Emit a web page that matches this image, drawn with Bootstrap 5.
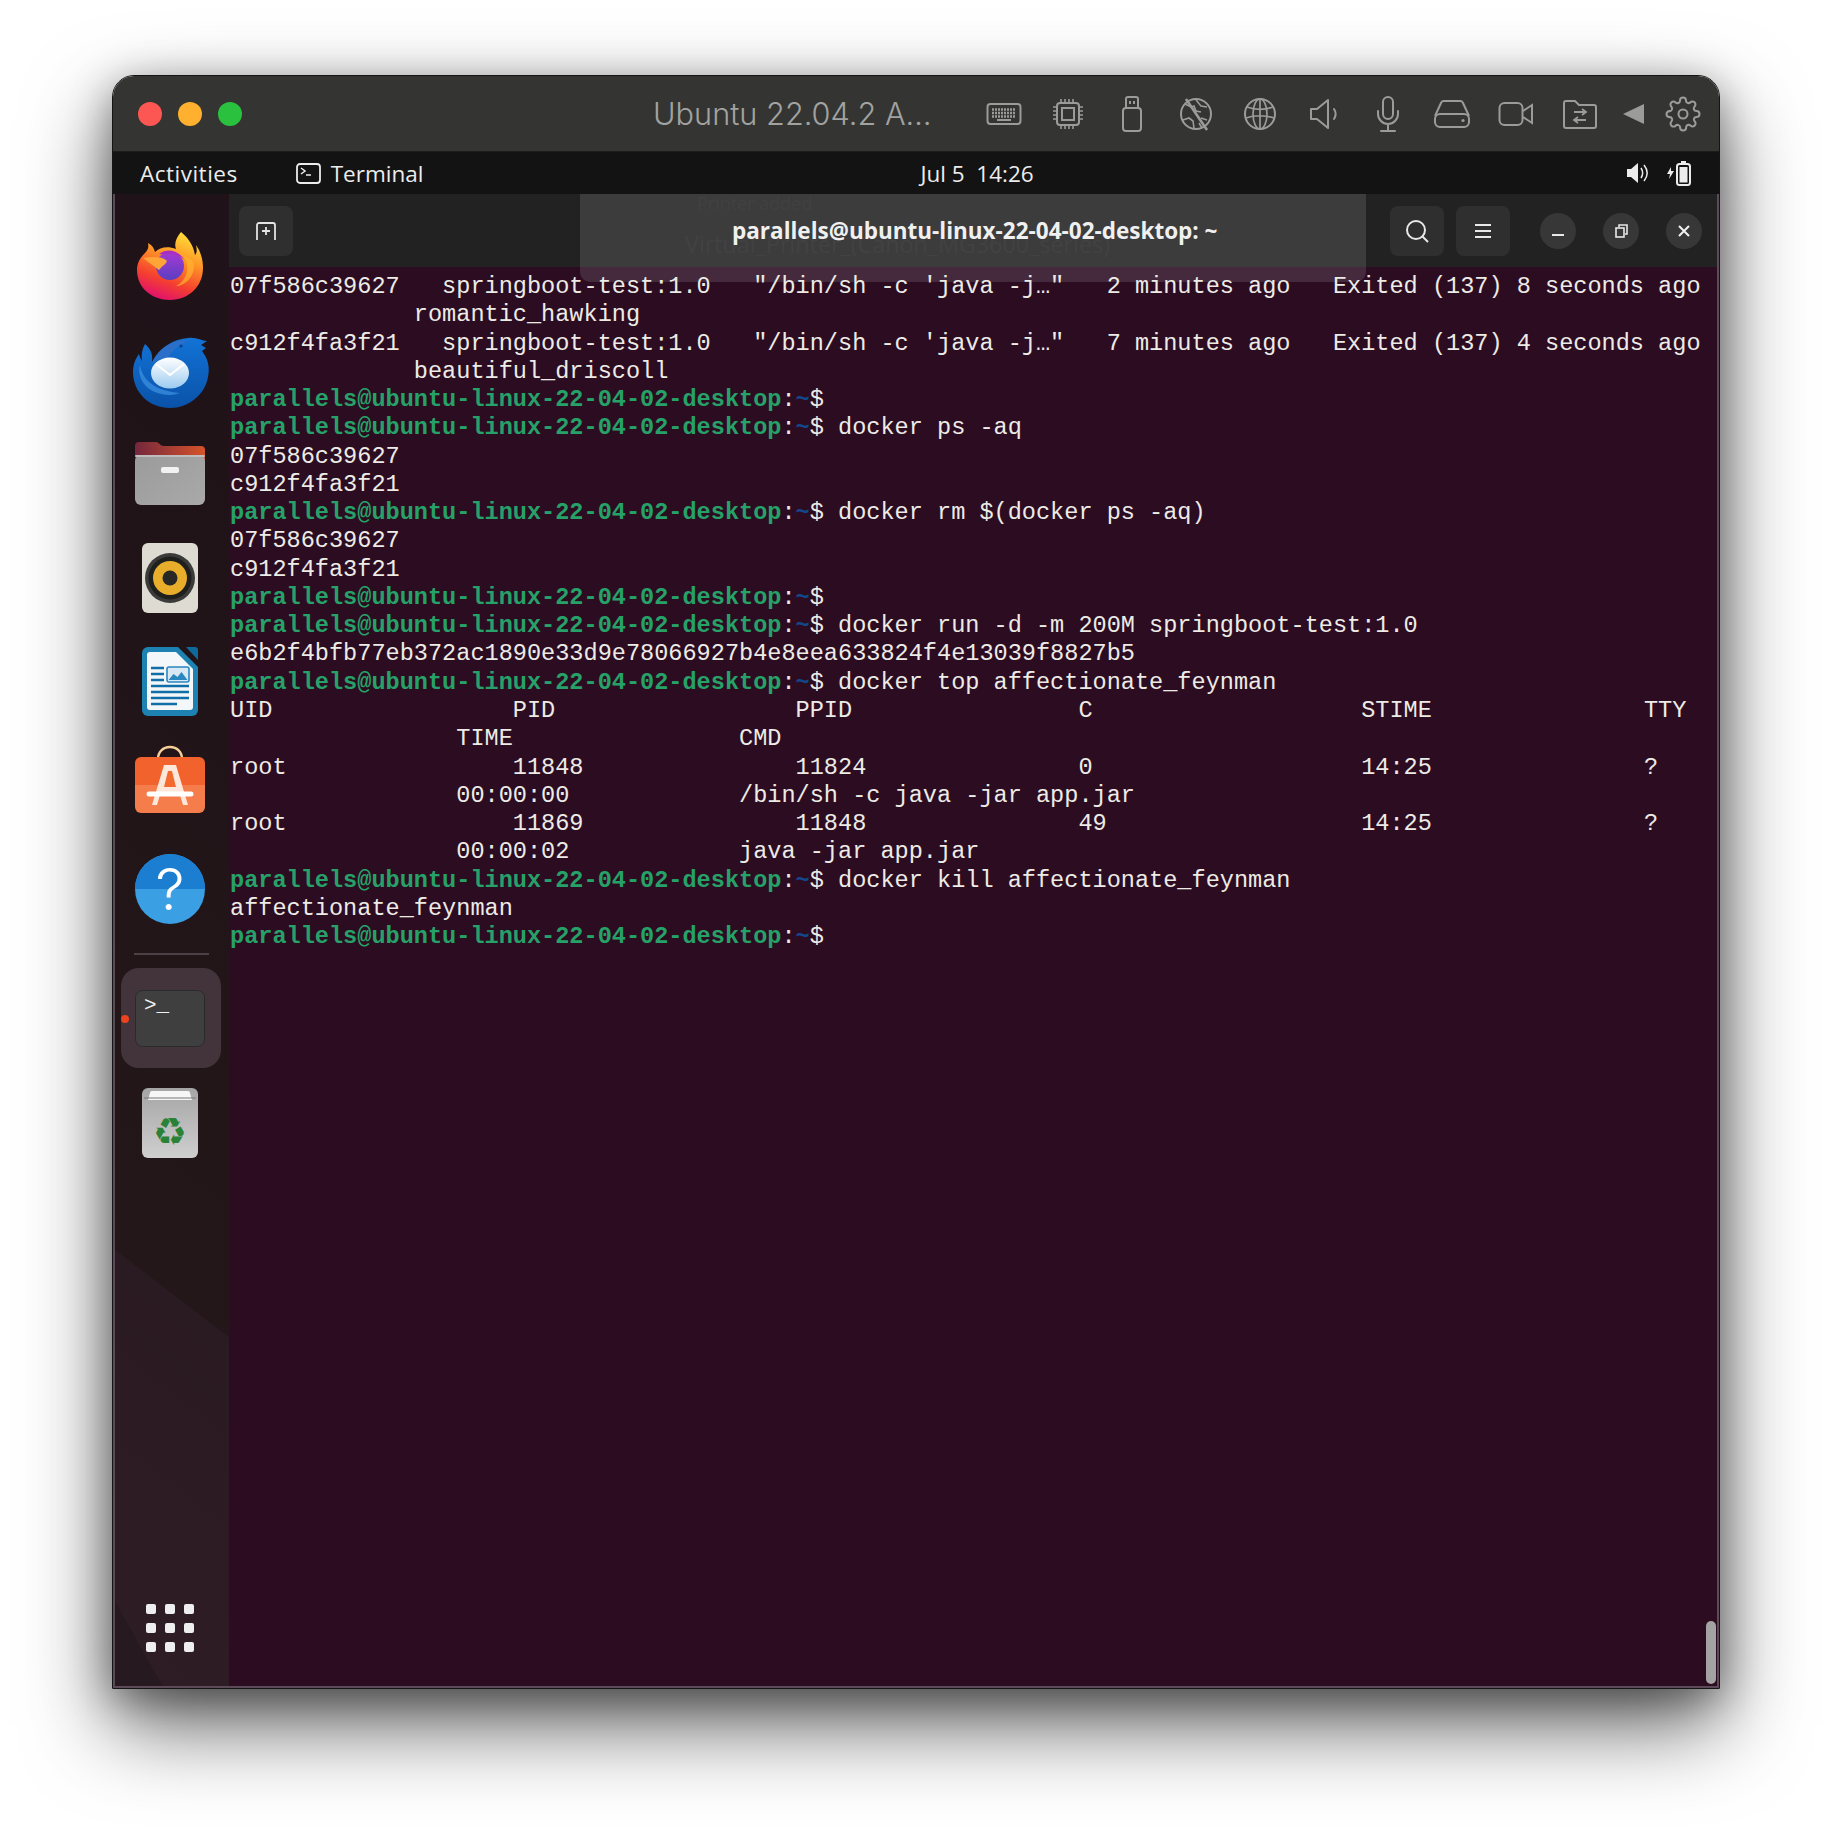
<!DOCTYPE html>
<html lang="en">
<head>
    <meta charset="UTF-8">
    <title>Ubuntu 22.04.2 - Terminal</title>
    <link href="https://cdn.jsdelivr.net/npm/bootstrap@5.3.0/dist/css/bootstrap.min.css" rel="stylesheet">
    <style>
        html, body { background: #fff; }
        .stage { padding: 75px 112px 147px; }
        .vm-window {
            height: 1614px;
            border: 1px solid #151515;
            border-radius: 22px 22px 0 0;
            overflow: hidden;
            box-shadow: 0 36px 85px rgba(0,0,0,.62), 0 10px 40px rgba(0,0,0,.35);
        }
        .vm-title { height: 76px; background: #343533; padding-left: 25px; border-bottom: 1px solid #1c1c1c; flex: none; }
        .light { width: 24px; height: 24px; border-radius: 50%; }
        .vm-name { margin-left: 411px; font: 300 30.7px Inter, "Liberation Sans", sans-serif; color: #a2a3a0; white-space: nowrap; }
        .tool-strip { padding-right: 9px; }
        .tool-slot { width: 64px; height: 40px; }
        .tool-tri { width: 44px; }
        .tool-gear { width: 54px; }
        .gnome-bar { height: 42px; background: #131313; color: #ececec; padding-left: 27px; flex: none; font: 400 22.5px "Open Sans", sans-serif; }
        .gnome-act { letter-spacing: .5px; }
        .gnome-app { margin-left: 58px; }
        .gnome-app svg { margin-right: 10px; }
        .gnome-clock { margin-left: 497px; font-size: 22.5px; white-space: pre; }
        .gnome-status { padding-right: 27px; }
        .vm-body { min-height: 0; border: solid #5d4a58; border-width: 0 2px 2px; }
        .dock {
            width: 114px;
            flex: none;
            padding-top: 20px;
            background:
                linear-gradient(240.6deg, transparent 790px, #271920 790px),
                linear-gradient(217.6deg, #1f1218 0, #231719 906px, #2a1a21 906px, #2f1d26 100%);
        }
        .dock-slot { height: 103px; margin-left: 15px; width: 80px; }
        .dock-slot svg { display: block; }
        .dock-sep { height: 2px; margin: 18px 0 0 19px; width: 75px; background: #4c3f46; }
        .dock-active { position: relative; width: 100px; height: 100px; margin: 13px 0 0 6px; border-radius: 18px; background: #43343c; }
        .dock-active svg { display: block; margin-left: 9px; padding-top: 0; }
        .dock-dot { position: absolute; left: 0; top: 47px; width: 8px; height: 8px; border-radius: 50%; background: #e9441f; }
        .apps-grid { margin: auto 0 34px 31px; display: grid; grid-template-columns: repeat(3, 10px); gap: 9px; }
        .apps-grid i { display: block; width: 10px; height: 10px; border-radius: 2px; background: #eeeeee; }
        .term-col { min-width: 0; position: relative; background: #2c0c21; }
        .head-bar { height: 73px; background: #222222; flex: none; }
        .head-btn { width: 54px; height: 50px; border-radius: 8px; background: #2f2f2f; flex: none; }
        .head-new { margin-left: 10px; }
        .head-name { margin-left: 439px; position: relative; z-index: 3; font: 700 22.5px "Open Sans", sans-serif; color: #f0f0f0; white-space: nowrap; }
        .head-right { padding-right: 15px; }
        .head-round { width: 36px; height: 36px; border-radius: 50%; background: #373737; }
        .gap-menu { margin-left: 12px; margin-right: 30px; }
        .gap-max { margin: 0 27px; }
        .notice {
            position: absolute; left: 351px; top: 0; width: 786px; height: 88px;
            background: rgba(255,255,255,.12);
            border-radius: 0 0 10px 10px;
            font: 400 23.3px/38px "Open Sans", sans-serif; color: #424242;
            z-index: 2; padding-left: 105px; margin: 0;
            white-space: nowrap;
        }
        .notice-head { margin: -10px 0 3px; padding-left: 12px; font-size: 18px; color: #414141; }
        .term-out {
            position: relative; z-index: 3;
            margin: 0; padding: 6px 0 0 1px; overflow: hidden;
            font: 400 23.57px/28.27px "Liberation Mono", monospace;
            color: #ecebe6; white-space: pre;
        }
        .pr { color: #26a269; font-weight: 700; }
        .pa { color: #12488b; font-weight: 700; }
        .scroll-thumb { position: absolute; right: 1px; bottom: 2px; width: 10px; height: 63px; border-radius: 5px; background: #a3a3a3; }
    </style>
</head>
<body>
<div class="stage">
<div class="vm-window d-flex flex-column">

    <div class="vm-title d-flex align-items-center">
        <div class="d-flex gap-3">
            <div class="light" style="background:#fd5754"></div>
            <div class="light" style="background:#feb02e"></div>
            <div class="light" style="background:#2ac13f"></div>
        </div>
        <div class="vm-name">Ubuntu 22.04.2 A…</div>
        <div class="tool-strip d-flex align-items-center ms-auto">
            <!-- keyboard -->
            <div class="tool-slot d-flex align-items-center justify-content-center">
                <svg width="36" height="24" viewBox="0 0 36 24" fill="none" stroke="#9b9c99" stroke-width="2"><rect x="1.5" y="2" width="33" height="20" rx="3"/><path d="M6 7.5h24M6 11h24M6 14.5h24" stroke-width="2.4" stroke-dasharray="2 1"/><path d="M11 18h14"/></svg>
            </div>
            <!-- cpu -->
            <div class="tool-slot d-flex align-items-center justify-content-center">
                <svg width="32" height="32" viewBox="0 0 32 32" fill="none" stroke="#9b9c99" stroke-width="2"><rect x="5" y="5" width="22" height="22" rx="3"/><rect x="10" y="10" width="12" height="12"/><path d="M9 1v4M13 1v4M17 1v4M21 1v4M9 27v4M13 27v4M17 27v4M21 27v4M1 9h4M1 13h4M1 17h4M1 21h4M27 9h4M27 13h4M27 17h4M27 21h4" stroke-width="1.6"/></svg>
            </div>
            <!-- usb -->
            <div class="tool-slot d-flex align-items-center justify-content-center">
                <svg width="22" height="36" viewBox="0 0 22 36" fill="none" stroke="#9b9c99" stroke-width="2"><rect x="2" y="12" width="18" height="23" rx="3"/><path d="M5 12V3a2 2 0 0 1 2-2h8a2 2 0 0 1 2 2v9"/><path d="M9 5v3M13 5v3"/></svg>
            </div>
            <!-- network off -->
            <div class="tool-slot d-flex align-items-center justify-content-center">
                <svg width="34" height="34" viewBox="0 0 34 34" fill="none" stroke="#9b9c99" stroke-width="2"><circle cx="17" cy="17" r="15"/><path d="M6 7l6 3 3-1 2 5 5 1M17 3l5 6 6 1M4 23l6-2 4 3 1 7M22 21l6 2M20 26l3 5" stroke-width="1.6"/><path d="M7 2l21 31" stroke-width="2.6"/></svg>
            </div>
            <!-- globe -->
            <div class="tool-slot d-flex align-items-center justify-content-center">
                <svg width="34" height="34" viewBox="0 0 34 34" fill="none" stroke="#9b9c99" stroke-width="2"><circle cx="17" cy="17" r="15"/><ellipse cx="17" cy="17" rx="7" ry="15" stroke-width="1.7"/><path d="M4 10c8 3 18 3 26 0M3 21c8-3 20-3 28 0M17 2v30" stroke-width="1.7"/></svg>
            </div>
            <!-- speaker -->
            <div class="tool-slot d-flex align-items-center justify-content-center">
                <svg width="30" height="32" viewBox="0 0 30 32" fill="none" stroke="#9b9c99" stroke-width="2" stroke-linejoin="round"><path d="M2 11v10h6l11 9V2L8 11z"/><path d="M25 11c2 3 2 7 0 10" stroke-linecap="round"/></svg>
            </div>
            <!-- mic -->
            <div class="tool-slot d-flex align-items-center justify-content-center">
                <svg width="26" height="36" viewBox="0 0 26 36" fill="none" stroke="#9b9c99" stroke-width="2" stroke-linecap="round"><rect x="8" y="1" width="10" height="22" rx="5"/><path d="M3 15v3a10 10 0 0 0 20 0v-3M13 28v6M6 35h14"/></svg>
            </div>
            <!-- disk -->
            <div class="tool-slot d-flex align-items-center justify-content-center">
                <svg width="38" height="28" viewBox="0 0 38 28" fill="none" stroke="#9b9c99" stroke-width="2"><path d="M2 16L8 3a3 3 0 0 1 3-2h16a3 3 0 0 1 3 2l6 13"/><rect x="2" y="14" width="34" height="13" rx="5"/><circle cx="30" cy="20.5" r="1.6" fill="#9b9c99" stroke="none"/></svg>
            </div>
            <!-- camera -->
            <div class="tool-slot d-flex align-items-center justify-content-center">
                <svg width="36" height="26" viewBox="0 0 36 26" fill="none" stroke="#9b9c99" stroke-width="2"><rect x="1.5" y="2" width="23" height="22" rx="5"/><path d="M25 10l9-6v18l-9-6"/></svg>
            </div>
            <!-- shared folder -->
            <div class="tool-slot d-flex align-items-center justify-content-center">
                <svg width="36" height="30" viewBox="0 0 36 30" fill="none" stroke="#9b9c99" stroke-width="2"><path d="M2 4a2 2 0 0 1 2-2h9l4 4h15a2 2 0 0 1 2 2v19a2 2 0 0 1-2 2H4a2 2 0 0 1-2-2z"/><path d="M12 13h11M20 10l4 3-4 3M24 21H13M16 18l-4 3 4 3" stroke-width="1.8"/></svg>
            </div>
            <div class="tool-slot tool-tri d-flex align-items-center justify-content-center">
                <svg width="22" height="20" viewBox="0 0 22 20"><path d="M0 10L21 0v20z" fill="#9b9c99"/></svg>
            </div>
            <div class="tool-slot tool-gear d-flex align-items-center justify-content-center">
                <svg width="36" height="36" viewBox="0 0 24 24" fill="none" stroke="#9b9c99" stroke-width="1.35"><circle cx="12" cy="12" r="3"/><path d="M19.4 15a1.65 1.65 0 0 0 .33 1.82l.06.06a2 2 0 0 1 0 2.83 2 2 0 0 1-2.83 0l-.06-.06a1.65 1.65 0 0 0-1.82-.33 1.65 1.65 0 0 0-1 1.51V21a2 2 0 0 1-2 2 2 2 0 0 1-2-2v-.09A1.65 1.65 0 0 0 9 19.4a1.65 1.65 0 0 0-1.82.33l-.06.06a2 2 0 0 1-2.83 0 2 2 0 0 1 0-2.83l.06-.06a1.65 1.65 0 0 0 .33-1.82 1.65 1.65 0 0 0-1.51-1H3a2 2 0 0 1-2-2 2 2 0 0 1 2-2h.09A1.65 1.65 0 0 0 4.6 9a1.65 1.65 0 0 0-.33-1.82l-.06-.06a2 2 0 0 1 0-2.83 2 2 0 0 1 2.83 0l.06.06a1.65 1.65 0 0 0 1.82.33H9a1.65 1.65 0 0 0 1-1.51V3a2 2 0 0 1 2-2 2 2 0 0 1 2 2v.09a1.65 1.65 0 0 0 1 1.51 1.65 1.65 0 0 0 1.82-.33l.06-.06a2 2 0 0 1 2.83 0 2 2 0 0 1 0 2.83l-.06.06a1.65 1.65 0 0 0-.33 1.82V9a1.65 1.65 0 0 0 1.51 1H21a2 2 0 0 1 2 2 2 2 0 0 1-2 2h-.09a1.65 1.65 0 0 0-1.51 1z"/></svg>
            </div>
        </div>
    </div>

    <div class="gnome-bar d-flex align-items-center">
        <span class="gnome-act">Activities</span>
        <span class="gnome-app d-flex align-items-center">
            <svg width="25" height="21" viewBox="0 0 25 21" fill="none" stroke="#ececec" stroke-width="1.8"><rect x="1" y="1" width="23" height="19" rx="3"/><path d="M5 5l4 3-4 3M10 12h5" stroke-width="1.5"/></svg>Terminal
        </span>
        <span class="gnome-clock">Jul 5  14:26</span>
        <span class="gnome-status d-flex align-items-center gap-3 ms-auto">
            <svg width="24" height="22" viewBox="0 0 24 22" fill="#ececec"><path d="M1 7v8h4l7 6V1L5 7z"/><path d="M15 6c2 3 2 7 0 10M18 3c4 5 4 11 0 16" fill="none" stroke="#ececec" stroke-width="1.5"/></svg>
            <svg width="26" height="26" viewBox="0 0 26 26" fill="none"><path d="M5 7L1 14h3l-1 5 5-8H5z" fill="#ececec"/><rect x="11" y="4" width="13" height="21" rx="2.5" stroke="#ececec" stroke-width="2"/><rect x="15" y="1" width="5" height="3" fill="#ececec"/><rect x="13.5" y="7" width="8" height="15.5" fill="#ececec"/></svg>
        </span>
    </div>

    <div class="vm-body d-flex flex-grow-1">
        <div class="dock d-flex flex-column">
            <!-- firefox -->
            <div class="dock-slot">
                <svg width="80" height="103" viewBox="0 0 80 103">
                    <defs>
                        <linearGradient id="ffBody" x1=".72" y1="0" x2=".35" y2="1"><stop offset="0" stop-color="#ffe03b"/><stop offset=".35" stop-color="#ff9a26"/><stop offset=".72" stop-color="#f5402f"/><stop offset="1" stop-color="#e0106e"/></linearGradient>
                        <linearGradient id="ffEye" x1="0" y1="0" x2="0" y2="1"><stop offset="0" stop-color="#a639d2"/><stop offset="1" stop-color="#5a3fc2"/></linearGradient>
                    </defs>
                    <path d="M51 18C46 24 44 30 46 35C38 32 30 33 25 38C24 34 22 31 18 29C19 33 18 36 15 39C9 45 7 50 7 56C7 74 22 86 40 86C59 86 73 72 73 54C73 46 71 38 66 31C67 36 67 39 65 41C63 30 58 24 51 18Z" fill="url(#ffBody)"/>
                    <circle cx="40" cy="52" r="14" fill="url(#ffEye)"/>
                    <path d="M29 40C38 33 50 37 55 47C53 43 46 40 40 40C36 40 32 41 29 40Z" fill="#a92fc4"/>
                    <path d="M13 44C21 43 30 42 36 46C39 48 33 51 29 56C24 52 18 48 13 44Z" fill="#ffa538"/>
                    <path d="M54 42C60 52 58 66 46 72C54 72 64 64 64 52C64 47 60 44 54 42Z" fill="#ffb52e" opacity=".7"/>
                </svg>
            </div>
            <!-- thunderbird -->
            <div class="dock-slot">
                <svg width="80" height="103" viewBox="0 0 80 103">
                    <defs>
                        <linearGradient id="tbBody" x1="0" y1="0" x2="0" y2="1"><stop offset="0" stop-color="#1273d6"/><stop offset="1" stop-color="#0a52a8"/></linearGradient>
                        <linearGradient id="tbEnv" x1="0" y1="0" x2="0" y2="1"><stop offset="0" stop-color="#ffffff"/><stop offset="1" stop-color="#9ccbf0"/></linearGradient>
                    </defs>
                    <path d="M15 27C21 32 23 38 22 45C30 30 44 22 58 21C66 20 72 24 77 24L71 28L76 31L72 34C78 42 80 50 78 60C75 78 58 91 40 91C20 91 3 76 3 55C3 47 6 41 9 37C10 41 11 42 12 44C11 38 12 32 15 27Z" fill="url(#tbBody)"/>
                    <path d="M22 47C27 31 44 22 60 23C50 27 42 33 38 41C32 41 26 43 22 47Z" fill="#2b6fc9"/>
                    <circle cx="51" cy="29" r="1.6" fill="#0a3f86"/>
                    <path d="M10 48C12 62 24 74 50 76C40 80 24 78 15 68C10 62 8 54 10 48Z" fill="#3b8fe0" opacity=".75"/>
                    <ellipse cx="40" cy="56" rx="19" ry="15.5" fill="url(#tbEnv)"/>
                    <path d="M26 47l14 11 14-11" fill="none" stroke="#ffffff" stroke-width="2"/>
                </svg>
            </div>
            <!-- files -->
            <div class="dock-slot">
                <svg width="80" height="103" viewBox="0 0 80 103">
                    <defs>
                        <linearGradient id="fiTab" x1="0" y1="0" x2="1" y2="0"><stop offset="0" stop-color="#74273d"/><stop offset="1" stop-color="#d6532a"/></linearGradient>
                        <linearGradient id="fiBox" x1="0" y1="0" x2="1" y2="1"><stop offset="0" stop-color="#9b9b9b"/><stop offset="1" stop-color="#a9a9a9"/></linearGradient>
                    </defs>
                    <path d="M5 40V26a4 4 0 0 1 4-4H26c3 0 4 4 8 4H71a4 4 0 0 1 4 4V40z" fill="url(#fiTab)"/>
                    <rect x="5" y="35" width="70" height="50" rx="6" fill="url(#fiBox)"/>
                    <rect x="5" y="35" width="70" height="2" rx="1" fill="#bdbdbd"/>
                    <rect x="31" y="47" width="18" height="6" rx="2" fill="#f2f2f2"/>
                </svg>
            </div>
            <!-- rhythmbox -->
            <div class="dock-slot">
                <svg width="80" height="103" viewBox="0 0 80 103">
                    <rect x="12" y="20" width="56" height="70" rx="6" fill="#dedbd2"/>
                    <circle cx="40" cy="55" r="25" fill="#3b3b39"/>
                    <circle cx="40" cy="55" r="21.5" fill="#1f1f1e"/>
                    <circle cx="40" cy="55" r="17" fill="#e8ae2b"/>
                    <circle cx="40" cy="55" r="7.5" fill="#272725"/>
                </svg>
            </div>
            <!-- writer -->
            <div class="dock-slot">
                <svg width="80" height="103" viewBox="0 0 80 103">
                    <path d="M56 21h9a3 3 0 0 1 3 3v10z" fill="#0f6a9c"/>
                    <path d="M18 21H48L68 41V84a6 6 0 0 1-6 6H18a6 6 0 0 1-6-6V27a6 6 0 0 1 6-6z" fill="#1d82b2"/>
                    <path d="M20 26H46L63 43V81a3 3 0 0 1-3 3H20a3 3 0 0 1-3-3V29a3 3 0 0 1 3-3z" fill="#f4f7f9"/>
                    <path d="M21 42h13M21 48h13M21 54h13M21 60h38M21 66h38M21 72h38M21 78h26" stroke="#0f6ea8" stroke-width="2.6"/>
                    <rect x="37" y="41" width="22" height="15" rx="2" fill="#d8e9f5" stroke="#2a87c0" stroke-width="1.6"/>
                    <path d="M38.5 54l5-6 4 3 4-5 6 8z" fill="#2a87c0"/>
                </svg>
            </div>
            <!-- software -->
            <div class="dock-slot">
                <svg width="80" height="103" viewBox="0 0 80 103">
                    <path d="M28 30c0-7 5-12 12-12s12 5 12 12" fill="none" stroke="#f4cf9a" stroke-width="2.4"/>
                    <path d="M11 28H69a6 6 0 0 1 6 6V56H5V34a6 6 0 0 1 6-6z" fill="#f2622c"/>
                    <path d="M5 56H75V78a6 6 0 0 1-6 6H11a6 6 0 0 1-6-6z" fill="#f57d4b"/>
                    <path d="M34 36h12l12 40h-5l-3-10H30l-3 10h-5z" fill="#fde7da"/>
                    <path d="M38 42h4l4 16H34z" fill="#f3692f"/>
                    <path d="M19 65H61" stroke="#ffffff" stroke-width="5" stroke-linecap="round"/>
                </svg>
            </div>
            <!-- help -->
            <div class="dock-slot">
                <svg width="80" height="103" viewBox="0 0 80 103">
                    <circle cx="40" cy="57" r="35" fill="#3a9fe3"/>
                    <path d="M5 57a35 35 0 0 1 70 0z" fill="#1b7ed1"/>
                    <text x="40" y="78" text-anchor="middle" font-family="Inter, sans-serif" font-weight="300" font-size="58" fill="#ffffff">?</text>
                </svg>
            </div>
            <div class="dock-sep"></div>
            <div class="dock-active">
                <span class="dock-dot"></span>
                <svg width="80" height="100" viewBox="0 0 80 100">
                    <rect x="5.5" y="22.5" width="69" height="56" rx="7" fill="#403f3f" stroke="#2b2a2a"/>
                    <text x="14" y="43" font-family="Liberation Mono, monospace" font-size="21" fill="#f2f2f2">&gt;_</text>
                </svg>
            </div>
            <!-- trash -->
            <div class="dock-slot">
                <svg width="80" height="103" viewBox="0 0 80 103">
                    <defs><linearGradient id="trBody" x1="0" y1="0" x2="0" y2="1"><stop offset="0" stop-color="#a5a5a5"/><stop offset="1" stop-color="#cfcfcf"/></linearGradient></defs>
                    <rect x="12" y="20" width="56" height="70" rx="6" fill="url(#trBody)"/>
                    <path d="M18 32l2-7a2 2 0 0 1 2-2H58a2 2 0 0 1 2 2l2 7z" fill="#f6f6f6"/>
                    <path d="M14 30h52" stroke="#777" stroke-width="1"/>
                    <text x="40" y="77" text-anchor="middle" font-family="DejaVu Sans, sans-serif" font-size="38" fill="#2a8236">♻</text>
                </svg>
            </div>
            <div class="apps-grid">
                <i></i><i></i><i></i><i></i><i></i><i></i><i></i><i></i><i></i>
            </div>
        </div>

        <div class="term-col flex-grow-1">
            <div class="notice"><div class="notice-head">Printer added</div>Virtual_Printer_(Canon_MG3600_series)</div>
            <div class="head-bar d-flex align-items-center">
                <div class="head-btn head-new d-flex align-items-center justify-content-center">
                    <svg width="24" height="24" viewBox="0 0 24 24" fill="none" stroke="#e4e4e4" stroke-width="1.8"><path d="M3 21V6a2 2 0 0 1 2-2h14a2 2 0 0 1 2 2v15"/><path d="M12 8v8M8 12h8"/></svg>
                </div>
                <div class="head-name">parallels@ubuntu-linux-22-04-02-desktop: ~</div>
                <div class="head-right d-flex align-items-center ms-auto">
                    <div class="head-btn d-flex align-items-center justify-content-center">
                        <svg width="26" height="26" viewBox="0 0 26 26" fill="none" stroke="#e8e8e8" stroke-width="2"><circle cx="12" cy="12" r="9"/><path d="M18.5 18.5L24 24"/></svg>
                    </div>
                    <div class="head-btn gap-menu d-flex align-items-center justify-content-center">
                        <svg width="18" height="18" viewBox="0 0 18 18" stroke="#e8e8e8" stroke-width="2"><path d="M1 3h16M1 9h16M1 15h16"/></svg>
                    </div>
                    <div class="head-round d-flex align-items-center justify-content-center">
                        <svg width="14" height="14" viewBox="0 0 14 14" stroke="#e8e8e8" stroke-width="2"><path d="M1 11h12"/></svg>
                    </div>
                    <div class="head-round gap-max d-flex align-items-center justify-content-center">
                        <svg width="14" height="14" viewBox="0 0 14 14" fill="none" stroke="#e8e8e8" stroke-width="1.6"><rect x="2" y="4" width="8" height="9"/><path d="M5 3V1h8v9h-2"/></svg>
                    </div>
                    <div class="head-round d-flex align-items-center justify-content-center">
                        <svg width="14" height="14" viewBox="0 0 14 14" stroke="#f0f0f0" stroke-width="2"><path d="M2 2l10 10M12 2L2 12"/></svg>
                    </div>
                </div>
            </div>
<pre class="term-out">07f586c39627   springboot-test:1.0   "/bin/sh -c 'java -j…"   2 minutes ago   Exited (137) 8 seconds ago
             romantic_hawking
c912f4fa3f21   springboot-test:1.0   "/bin/sh -c 'java -j…"   7 minutes ago   Exited (137) 4 seconds ago
             beautiful_driscoll
<span class="pr">parallels@ubuntu-linux-22-04-02-desktop</span>:<span class="pa">~</span>$
<span class="pr">parallels@ubuntu-linux-22-04-02-desktop</span>:<span class="pa">~</span>$ docker ps -aq
07f586c39627
c912f4fa3f21
<span class="pr">parallels@ubuntu-linux-22-04-02-desktop</span>:<span class="pa">~</span>$ docker rm $(docker ps -aq)
07f586c39627
c912f4fa3f21
<span class="pr">parallels@ubuntu-linux-22-04-02-desktop</span>:<span class="pa">~</span>$
<span class="pr">parallels@ubuntu-linux-22-04-02-desktop</span>:<span class="pa">~</span>$ docker run -d -m 200M springboot-test:1.0
e6b2f4bfb77eb372ac1890e33d9e78066927b4e8eea633824f4e13039f8827b5
<span class="pr">parallels@ubuntu-linux-22-04-02-desktop</span>:<span class="pa">~</span>$ docker top affectionate_feynman
UID                 PID                 PPID                C                   STIME               TTY
                TIME                CMD
root                11848               11824               0                   14:25               ?
                00:00:00            /bin/sh -c java -jar app.jar
root                11869               11848               49                  14:25               ?
                00:00:02            java -jar app.jar
<span class="pr">parallels@ubuntu-linux-22-04-02-desktop</span>:<span class="pa">~</span>$ docker kill affectionate_feynman
affectionate_feynman
<span class="pr">parallels@ubuntu-linux-22-04-02-desktop</span>:<span class="pa">~</span>$</pre>
            <div class="scroll-thumb"></div>
        </div>
    </div>
</div>
</div>
<script src="https://cdn.jsdelivr.net/npm/bootstrap@5.3.0/dist/js/bootstrap.bundle.min.js"></script>
</body>
</html>
